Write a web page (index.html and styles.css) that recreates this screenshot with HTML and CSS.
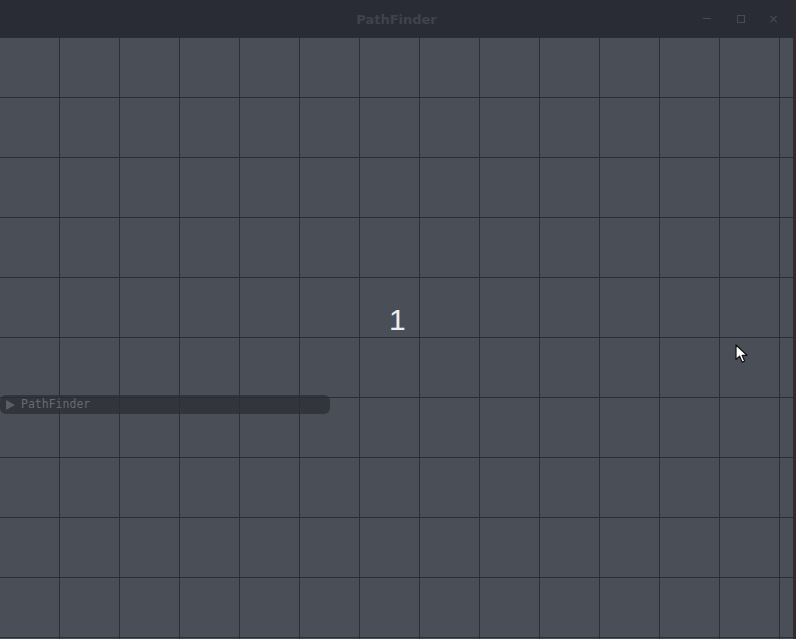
FILE: index.html
```html
<!DOCTYPE html>
<html>
<head>
<meta charset="utf-8">
<link rel="stylesheet" href="styles.css">
</head>
<body>
<div class="window">
  <header class="titlebar">
    <span class="title">PathFinder</span>
    <div class="controls">
      <span class="btn min"></span>
      <span class="btn max"></span>
      <span class="btn close">×</span>
    </div>
  </header>
  <main class="canvas">
    <div class="number">1</div>
    <div class="panel">
      <svg class="tri" width="9" height="10" viewBox="0 0 9 10"><polygon points="0,0 9,5 0,10" fill="#5b5e65"/></svg>
      <span class="panel-title">PathFinder</span>
    </div>
    <svg class="cursor" width="14" height="20" viewBox="0 0 14 20">
      <path d="M1 1 L1 15.5 L4.6 12.2 L7.2 18.2 L9.6 17.1 L7.1 11.3 L12 11.3 Z" fill="#ffffff" stroke="#111" stroke-width="1.2" stroke-linejoin="round"/>
    </svg>
  </main>
</div>
</body>
</html>
```

FILE: styles.css
```css
html, body {
  margin: 0;
  padding: 0;
  width: 796px;
  height: 639px;
  overflow: hidden;
  background: #292c35;
}
.window {
  width: 796px;
  height: 639px;
  display: flex;
  flex-direction: column;
  box-sizing: border-box;
  border-right: 3px solid #33292e;
}
.titlebar {
  height: 37px;
  flex: 0 0 37px;
  background: #292c35;
  display: flex;
  align-items: center;
  justify-content: center;
  position: relative;
  font-family: "DejaVu Sans", "Open Sans", sans-serif;
}
.title {
  font-size: 13px;
  font-weight: bold;
  color: #3f434b;
  margin-left: 0;
  margin-top: 1px;
}
.controls {
  position: absolute;
  right: 4px;
  top: 0;
  height: 37px;
  display: flex;
  align-items: center;
}
.btn {
  width: 34px;
  height: 37px;
  display: flex;
  align-items: center;
  justify-content: center;
  color: #474b53;
}
.min::before {
  content: "";
  width: 8px;
  height: 1px;
  background: #474b53;
  margin-left: 2px;
}
.max::before {
  content: "";
  width: 6px;
  height: 6px;
  border: 1px solid #474b53;
  margin-left: 2px;
}
.close {
  font-size: 13px;
  margin-left: 1px;
  width: 31px;
}
.canvas {
  flex: 1;
  position: relative;
  background-color: #4a4e57;
  background-image:
    linear-gradient(to right, transparent 59px, #2b2e35 59px),
    linear-gradient(to bottom, #2b2e35 1px, transparent 1px);
  background-size: 60px 60px;
  background-position: 0 0;
  overflow: hidden;
}
.number {
  position: absolute;
  left: 389px;
  top: 265px;
  font-family: "Liberation Sans", Arial, sans-serif;
  font-size: 30px;
  line-height: 36px;
  color: #eceef0;
}
.panel {
  position: absolute;
  left: 0;
  top: 358px;
  width: 330px;
  height: 19px;
  border-radius: 6px;
  background: rgba(44, 47, 54, 0.8);
  display: flex;
  align-items: center;
  gap: 6px;
  padding-left: 6px;
  box-sizing: border-box;
}
.tri {
  display: block;
}
.panel-title {
  font-family: "DejaVu Sans Mono", "Liberation Mono", monospace;
  font-size: 11.5px;
  color: #676a70;
  line-height: 19px;
}
.cursor {
  position: absolute;
  left: 735px;
  top: 307px;
}
```
